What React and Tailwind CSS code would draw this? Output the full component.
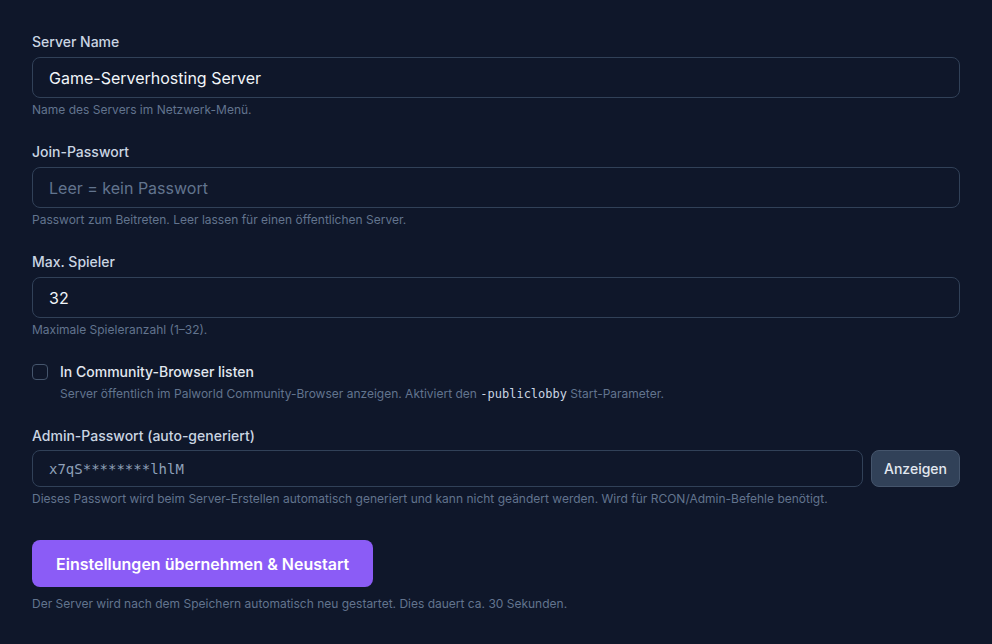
export default function App() {
  const font = { fontFamily: "Inter, 'Noto Sans', sans-serif" };
  const mono = "font-['DejaVu_Sans_Mono',monospace]";
  const inputCls =
    "block h-[41px] w-full rounded-lg border border-slate-700 bg-[#0f172a] px-4 text-base text-slate-100 placeholder:text-slate-500 outline-none";
  return (
    <div className="min-h-[644px] bg-[#0f172a] px-8 pt-8 pb-8 font-['Inter',sans-serif]" style={font}>
      <div className="flex flex-col gap-6">
        <div>
          <label className="block text-sm font-medium text-slate-300 mb-[5px]">Server Name</label>
          <input className={inputCls} defaultValue="Game-Serverhosting Server" />
          <p className="mt-1 text-xs text-slate-500">Name des Servers im Netzwerk-Menü.</p>
        </div>
        <div>
          <label className="block text-sm font-medium text-slate-300 mb-[5px]">Join-Passwort</label>
          <input className={inputCls} placeholder="Leer = kein Passwort" />
          <p className="mt-1 text-xs text-slate-500">Passwort zum Beitreten. Leer lassen für einen öffentlichen Server.</p>
        </div>
        <div>
          <label className="block text-sm font-medium text-slate-300 mb-[5px]">Max. Spieler</label>
          <input className={inputCls} defaultValue="32" />
          <p className="mt-1 text-xs text-slate-500">Maximale Spieleranzahl (1–32).</p>
        </div>
        <div className="flex items-start gap-3">
          <div className="mt-0.5 h-4 w-4 shrink-0 rounded border border-slate-600 bg-[#0f172a]" />
          <div>
            <div className="text-sm font-medium text-slate-200 leading-5">In Community-Browser listen</div>
            <p className="mt-1 text-xs text-slate-500">
              Server öffentlich im Palworld Community-Browser anzeigen. Aktiviert den{" "}
              <code className={`${mono} text-slate-300`}>-publiclobby</code> Start-Parameter.
            </p>
          </div>
        </div>
        <div>
          <label className="block text-sm font-medium text-slate-300 mb-1">Admin-Passwort (auto-generiert)</label>
          <div className="flex gap-2">
            <input
              readOnly
              className={`block h-[37px] flex-1 rounded-lg border border-slate-700 bg-[#0f172a] px-4 text-sm text-slate-400 outline-none ${mono}`}
              value="x7qS********lhlM"
            />
            <button className="h-[37px] rounded-lg border border-slate-600 bg-slate-700 px-3 text-sm font-medium text-slate-200">
              Anzeigen
            </button>
          </div>
          <p className="mt-1 text-xs text-slate-500">
            Dieses Passwort wird beim Server-Erstellen automatisch generiert und kann nicht geändert werden. Wird für RCON/Admin-Befehle benötigt.
          </p>
        </div>
        <div className="pt-[9px]">
          <button className="h-[47px] rounded-lg bg-[#8b5cf6] px-6 text-base font-semibold text-white">
            Einstellungen übernehmen &amp; Neustart
          </button>
          <p className="mt-[9px] text-xs text-slate-500">
            Der Server wird nach dem Speichern automatisch neu gestartet. Dies dauert ca. 30 Sekunden.
          </p>
        </div>
      </div>
    </div>
  );
}
